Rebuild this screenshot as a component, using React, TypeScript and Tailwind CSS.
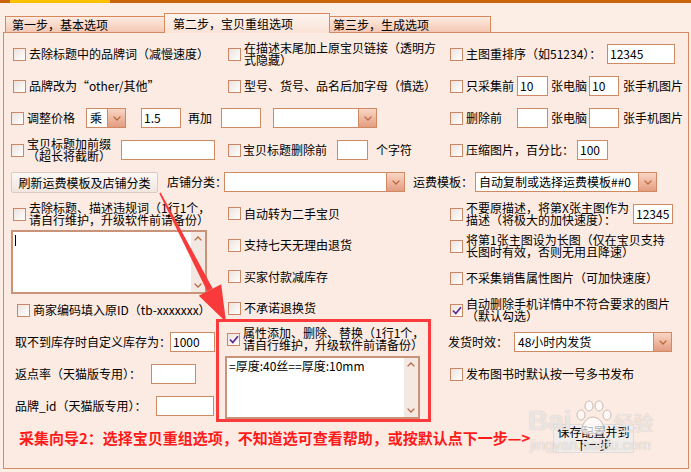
import type { ReactNode } from 'react';

function Chevron({ up }: { up?: boolean }) {
  return (
    <svg width="8" height="5" viewBox="0 0 8 5">
      <path
        d={up ? 'M0.6 4.4 L4 1 L7.4 4.4' : 'M0.6 0.6 L4 4 L7.4 0.6'}
        fill="none"
        stroke="#b8693f"
        strokeWidth="1.3"
      />
    </svg>
  );
}

function Box({ checked }: { checked?: boolean }) {
  return (
    <span className="w-[13px] h-[13px] shrink-0 border border-[#c98766] bg-gradient-to-br from-[#ece2dd] to-white flex items-center justify-center">
      {checked && (
        <svg width="10" height="9" viewBox="0 0 10 9">
          <path d="M1 4.5 L3.8 7.5 L9 1.2" fill="none" stroke="#5e2a91" strokeWidth="1.8" />
        </svg>
      )}
    </span>
  );
}

function Check({ checked, children, className = '' }: { checked?: boolean; children: ReactNode; className?: string }) {
  return (
    <div className={'flex items-center gap-[3px] ' + className}>
      <Box checked={checked} />
      <span className="whitespace-nowrap leading-[12px]">{children}</span>
    </div>
  );
}

function Input({ className, value = '' }: { className: string; value?: string }) {
  return (
    <div className={'h-[20px] shrink-0 border border-[#d08a63] bg-white pl-[2px] leading-[18px] ' + className}>
      {value}
    </div>
  );
}

function Select({ className, value = '' }: { className: string; value?: string }) {
  return (
    <div className={'h-[20px] shrink-0 flex border border-[#d08a63] bg-white ' + className}>
      <span className="flex-1 pl-[3px] leading-[18px] whitespace-nowrap overflow-hidden">{value}</span>
      <span className="w-[18px] border-l border-[#d08a63] bg-gradient-to-b from-[#f9d6c4] to-[#e39c80] flex items-center justify-center">
        <Chevron />
      </span>
    </div>
  );
}

function Memo({ className, children }: { className: string; children?: ReactNode }) {
  return (
    <div className={'flex border-2 border-[#c9937a] bg-white ' + className}>
      <div className="flex-1 pl-[1px] pt-[1px] leading-[13px] whitespace-nowrap">{children}</div>
      <div className="w-[14px] bg-[#f4e8e2] flex flex-col justify-between items-center py-[4px]">
        <Chevron up />
        <Chevron />
      </div>
    </div>
  );
}

export default function App() {
  return (
    <div className="relative w-[691px] h-[472px] overflow-hidden bg-[#fcede5] text-[12px] text-black font-['Noto_Sans_CJK_SC',sans-serif]">
      {/* top strip */}
      <div className="h-[3px] bg-[#c8650c]">
        <div className="ml-[10px] w-[100px] h-[3px] bg-[#ffc000]" />
      </div>

      {/* tabs */}
      <div className="relative z-10 mt-[10px] ml-[5px] h-[20px] flex items-end">
        <div className="w-[160px] h-[16px] mb-px border border-b-0 border-[#d8895b] bg-gradient-to-b from-[#fcebe2] to-[#f4c8b3] pl-[6px] leading-[15px]">
          第一步，基本选项
        </div>
        <div className="-ml-px w-[166px] h-[20px] border border-b-0 border-[#d8895b] bg-gradient-to-b from-[#fdf4ef] to-[#fae2d6] pl-[8px] leading-[20px]">
          第二步，宝贝重组选项
        </div>
        <div className="-ml-px w-[162px] h-[16px] mb-px border border-b-0 border-[#d8895b] bg-gradient-to-b from-[#fcebe2] to-[#f4c8b3] pl-[3px] leading-[15px]">
          第三步，生成选项
        </div>
      </div>

      {/* panel */}
      <div className="-mt-px ml-[3px] w-[686px] h-[437px] border border-[#d28b63] bg-[#fcebe2] pt-[5px] pl-[7px]">
        {/* row 1 */}
        <div className="h-[32px] flex items-center">
          <div className="w-[217px]">
            <Check className="ml-[2px]">去除标题中的品牌词（减慢速度）</Check>
          </div>
          <div className="w-[222px]">
            <Check>
              在描述末尾加上原宝贝链接（透明方
              <br />
              式隐藏）
            </Check>
          </div>
          <div className="flex items-center">
            <Box />
            <span className="ml-[3px] w-[141px] whitespace-nowrap">主图重排序（如51234）：</span>
            <Input className="w-[68px]" value="12345" />
          </div>
        </div>

        {/* row 2 */}
        <div className="h-[32px] flex items-center">
          <div className="w-[217px]">
            <Check className="ml-[2px]">品牌改为“other/其他”</Check>
          </div>
          <div className="w-[222px]">
            <Check>型号、货号、品名后加字母（慎选）</Check>
          </div>
          <div className="flex items-center">
            <Box />
            <span className="ml-[3px] w-[51px] whitespace-nowrap">只采集前</span>
            <Input className="w-[31px]" value="10" />
            <span className="w-[41px] pl-[3px] whitespace-nowrap">张电脑</span>
            <Input className="w-[30px]" value="10" />
            <span className="ml-[4px] whitespace-nowrap">张手机图片</span>
          </div>
        </div>

        {/* row 3 */}
        <div className="h-[32px] flex items-center">
          <div className="w-[439px] flex items-center">
            <Box />
            <span className="ml-[3px] w-[59px] whitespace-nowrap">调整价格</span>
            <Select className="w-[40px]" value="乘" />
            <Input className="ml-[15px] w-[40px]" value="1.5" />
            <span className="ml-[7px] w-[33px]">再加</span>
            <Input className="w-[40px]" />
            <Select className="ml-[12px] w-[104px]" />
          </div>
          <div className="flex items-center">
            <Box />
            <span className="ml-[3px] w-[51px] whitespace-nowrap">删除前</span>
            <Input className="w-[31px]" />
            <span className="w-[41px] pl-[3px] whitespace-nowrap">张电脑</span>
            <Input className="w-[30px]" />
            <span className="ml-[4px] whitespace-nowrap">张手机图片</span>
          </div>
        </div>

        {/* row 4 */}
        <div className="h-[32px] flex items-center">
          <div className="w-[217px] flex items-center">
            <Box />
            <span className="ml-[3px] w-[94px] whitespace-nowrap leading-[12px]">
              宝贝标题加前缀
              <br />
              （超长将截断）
            </span>
            <Input className="w-[94px]" />
          </div>
          <div className="w-[222px] flex items-center">
            <Box />
            <span className="ml-[2px] w-[94px] whitespace-nowrap">宝贝标题删除前</span>
            <Input className="w-[31px]" />
            <span className="ml-[8px]">个字符</span>
          </div>
          <div className="flex items-center">
            <Box />
            <span className="ml-[3px] w-[111px] whitespace-nowrap">压缩图片，百分比：</span>
            <Input className="w-[31px]" value="100" />
          </div>
        </div>

        {/* row 5 */}
        <div className="h-[32px] flex items-center">
          <button className="w-[147px] h-[21px] rounded-[2px] border border-[#dccbc2] bg-gradient-to-b from-[#fdf8f5] to-[#f1e5df] text-[12px] leading-[19px]">
            刷新运费模板及店铺分类
          </button>
          <span className="ml-[9px] w-[57px] whitespace-nowrap">店铺分类：</span>
          <Select className="w-[181px]" />
          <span className="ml-[8px] w-[62px] whitespace-nowrap">运费模板：</span>
          <Select className="w-[182px]" value="自动复制或选择运费模板##0" />
        </div>

        {/* lower section */}
        <div className="h-[224px] flex">
          <div className="w-[217px] flex flex-col">
            <div className="h-[32px] flex items-center">
              <Check className="ml-[2px]">
                去除标题、描述违规词（1行1个，
                <br />
                请自行维护，升级软件前请备份）
              </Check>
            </div>
            <Memo className="w-[196px] h-[64px]">
              <span className="inline-block w-px h-[11px] mt-[2px] ml-[1px] bg-black" />
            </Memo>
            <div className="h-[32px] flex items-center">
              <Check className="ml-[6px]">商家编码填入原ID（tb-xxxxxxx）</Check>
            </div>
            <div className="h-[32px] flex items-center">
              <span className="ml-[4px] w-[155px] whitespace-nowrap">取不到库存时自定义库存为：</span>
              <Input className="w-[45px]" value="1000" />
            </div>
            <div className="h-[32px] flex items-center">
              <span className="ml-[4px] w-[136px] whitespace-nowrap">返点率（天猫版专用）：</span>
              <Input className="w-[45px]" />
            </div>
            <div className="h-[32px] flex items-center">
              <span className="ml-[4px] w-[141px] whitespace-nowrap">品牌_id（天猫版专用）：</span>
              <Input className="w-[58px]" />
            </div>
          </div>

          <div className="w-[222px] flex flex-col">
            <div className="h-[32px] flex items-center">
              <Check>自动转为二手宝贝</Check>
            </div>
            <div className="h-[32px] flex items-center">
              <Check>支持七天无理由退货</Check>
            </div>
            <div className="h-[32px] flex items-center">
              <Check>买家付款减库存</Check>
            </div>
            <div className="h-[32px] flex items-center">
              <Check>不承诺退换货</Check>
            </div>
            <div className="-mt-[5px] -ml-[12px] w-[215px] h-[103px] shrink-0 border-[3px] border-[#fb3b3b] flex flex-col pl-[6px]">
              <div className="h-[34px] flex items-center pl-[2px]">
                <Check checked>
                  属性添加、删除、替换（1行1个，
                  <br />
                  请自行维护，升级软件前请备份）
                </Check>
              </div>
              <Memo className="w-[195px] h-[63px]">
                <span className="pl-[1px]">=厚度:40丝==厚度:10mm</span>
              </Memo>
            </div>
          </div>

          <div className="flex flex-col">
            <div className="h-[32px] flex items-center">
              <Box />
              <span className="ml-[3px] w-[167px] whitespace-nowrap leading-[12px]">
                不要原描述，将第X张主图作为
                <br />
                描述（将极大的加快速度）：
              </span>
              <Input className="w-[40px]" value="12345" />
            </div>
            <div className="h-[32px] flex items-center">
              <Check>
                将第1张主图设为长图（仅在宝贝支持
                <br />
                长图时有效，否则无用且降速）
              </Check>
            </div>
            <div className="h-[32px] flex items-center">
              <Check>不采集销售属性图片（可加快速度）</Check>
            </div>
            <div className="h-[32px] flex items-center">
              <Check checked>
                自动删除手机详情中不符合要求的图片
                <br />
                （默认勾选）
              </Check>
            </div>
            <div className="h-[32px] flex items-center">
              <span className="-ml-[2px] w-[66px] whitespace-nowrap">发货时效：</span>
              <Select className="w-[158px]" value="48小时内发货" />
            </div>
            <div className="h-[32px] flex items-center">
              <Check>发布图书时默认按一号多书发布</Check>
            </div>
          </div>
        </div>

        {/* bottom row */}
        <div className="h-[32px] flex items-center">
          <span className="ml-[8px] w-[534px] whitespace-nowrap text-[15px] font-bold text-[#ff1a1a]">
            采集向导2：选择宝贝重组选项，不知道选可查看帮助，或按默认点下一步—&gt;
          </span>
          <button className="w-[81px] h-[29px] border border-[#e3dbd7] bg-[#f1edeb] text-[12px] leading-[13px]">
            保存配置并到
            <br />
            下一步
          </button>
        </div>
      </div>

      {/* red annotation arrow */}
      <svg className="absolute left-0 top-0 pointer-events-none" width="691" height="472">
        <polygon points="159.3,193.4 160.7,192.6 212.7,288.6 207.3,291.4" fill="#f83a3a" />
        <polygon points="226,322 198.8,295.8 221.2,284.2" fill="#f83a3a" />
      </svg>

      {/* watermark */}
      <div className="absolute left-[528px] top-[394px] pointer-events-none text-white/70 [text-shadow:0_0_1px_#b9aaa2]">
        <div className="flex items-end h-[42px]">
          <span className="font-['Liberation_Sans',sans-serif] font-bold text-[28px] leading-[30px]">Bai</span>
          <svg width="42" height="38" viewBox="0 0 42 38" className="-mb-[2px]">
            <g fill="#ffffff" fillOpacity="0.7" stroke="#c9bbb3" strokeWidth="1">
              <ellipse cx="9" cy="15" rx="4" ry="5" />
              <ellipse cx="17" cy="6" rx="4" ry="5" />
              <ellipse cx="27" cy="6" rx="4" ry="5" />
              <ellipse cx="35" cy="15" rx="4" ry="5" />
              <path d="M21 17 C14 17 9 26 10 31 C11 36 17 34 21 33 C25 34 31 36 32 31 C33 26 28 17 21 17 Z" />
            </g>
          </svg>
          <span className="text-[20px] leading-[26px]">经验</span>
        </div>
        <div className="font-['Liberation_Sans',sans-serif] text-[15px] leading-[18px] ml-[2px]">jingyan.baidu.com</div>
      </div>
    </div>
  );
}
